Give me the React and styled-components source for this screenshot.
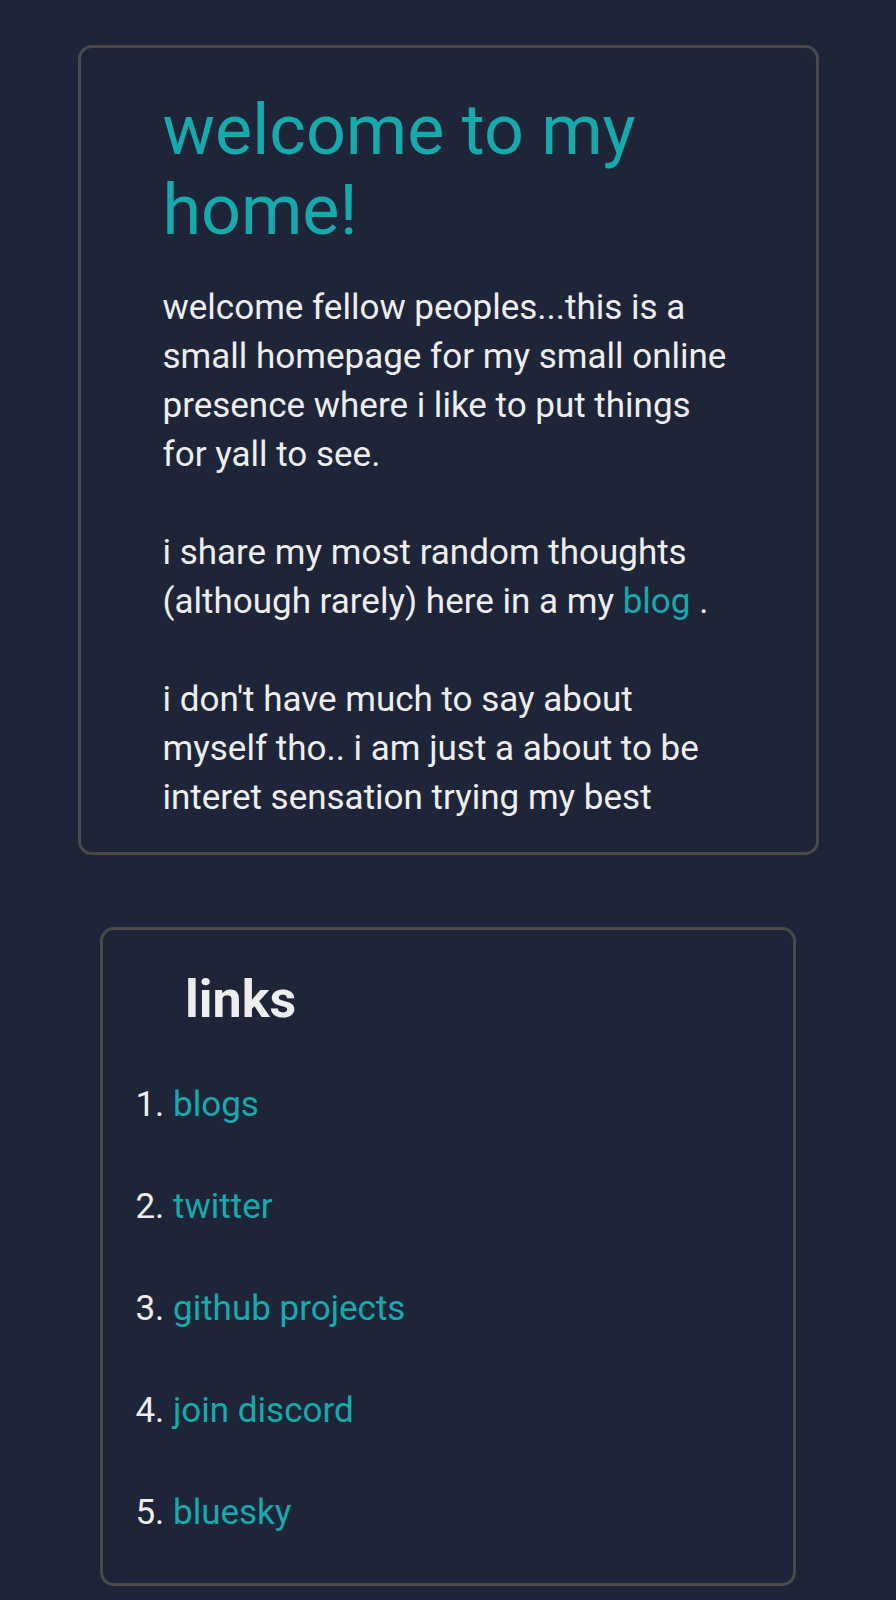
import React from 'react';
import styled, { createGlobalStyle } from 'styled-components';

const GlobalStyle = createGlobalStyle`
  html, body {
    margin: 0;
    padding: 0;
    background: #1e2539;
  }
  body {
    font-family: Roboto, "Noto Sans", "Liberation Sans", sans-serif;
    color: #eeeeee;
  }
`;

const Page = styled.main`
  display: flex;
  flex-direction: column;
  align-items: center;
  padding: 45px 0 15px;
  gap: 72px;
`;

const Card = styled.section`
  box-sizing: border-box;
  width: ${(p) => p.$width}px;
  border: 3px solid #4a4a4c;
  border-radius: 14px;
  padding: ${(p) => p.$padding};
`;

const Title = styled.h1`
  margin: 0 0 33px;
  font-size: 70px;
  line-height: 80px;
  font-weight: 400;
  color: #17aaac;
`;

const Text = styled.p`
  margin: 0;
  font-size: 35px;
  line-height: 49px;
  color: #eeeeee;

  & + & {
    margin-top: 49px;
  }
`;

const Link = styled.a`
  color: #17aaac;
  text-decoration: none;
`;

const LinksTitle = styled.h2`
  margin: 0 0 0 82px;
  font-size: 52px;
  line-height: 60px;
  font-weight: 700;
  color: #eeeeee;
`;

const List = styled.ol`
  margin: 50px 0 0;
  padding-left: 70px;
  display: flex;
  flex-direction: column;
  gap: 53px;
`;

const Item = styled.li`
  font-size: 35px;
  line-height: 49px;
  color: #eeeeee;
`;

const links = ['blogs', 'twitter', 'github projects', 'join discord', 'bluesky'];

export default function App() {
  return (
    <>
      <GlobalStyle />
      <Page>
        <Card $width={741} $padding="42px 82px 30px">
          <Title>welcome to my home!</Title>
          <Text>
            welcome fellow peoples...this is a small homepage for my small online
            presence where i like to put things for yall to see.
          </Text>
          <Text>
            i share my most random thoughts (although rarely) here in a my{' '}
            <Link href="#">blog</Link> .
          </Text>
          <Text>
            i don't have much to say about myself tho.. i am just a about to be
            interet sensation trying my best
          </Text>
        </Card>
        <Card $width={696} $padding="40px 0 46px">
          <LinksTitle>links</LinksTitle>
          <List>
            {links.map((l) => (
              <Item key={l}>
                <Link href="#">{l}</Link>
              </Item>
            ))}
          </List>
        </Card>
      </Page>
    </>
  );
}
